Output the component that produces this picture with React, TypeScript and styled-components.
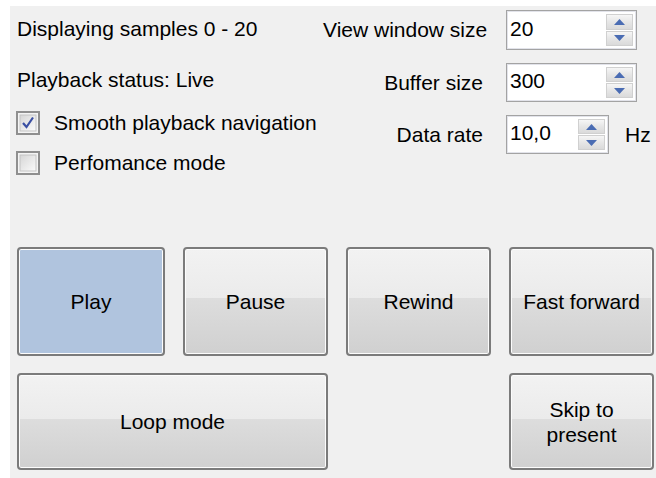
import React from 'react'
import styled, { createGlobalStyle } from 'styled-components'

const GlobalStyle = createGlobalStyle`
  html, body {
    margin: 0;
    background: #fff;
  }
  body {
    font-family: 'Liberation Sans', Arial, sans-serif;
    font-size: 21px;
    color: #000;
  }
`

const Panel = styled.div`
  margin: 6px 0 0 10px;
  height: 472px;
  box-sizing: border-box;
  padding: 4px 0 0 7px;
  background: #f0f0f0;
  overflow: hidden;
`

const TopRow = styled.div`
  display: grid;
  grid-template-columns: 306px 1fr;
  align-items: start;
`

const LeftColumn = styled.div`
  display: flex;
  flex-direction: column;
  padding-top: 7px;
`

const Line = styled.div<{ $gap?: number }>`
  height: 24px;
  line-height: 24px;
  white-space: nowrap;
  margin-top: ${({ $gap }) => $gap ?? 0}px;
`

const CheckRow = styled.label<{ $gap?: number }>`
  display: flex;
  align-items: center;
  gap: 14px;
  height: 24px;
  line-height: 24px;
  white-space: nowrap;
  margin-left: -1px;
  margin-top: ${({ $gap }) => $gap ?? 0}px;
`

const Form = styled.div`
  display: grid;
  grid-template-columns: 160px auto;
  grid-template-rows: 40px 39px 39px;
  column-gap: 23px;
  row-gap: 13px;
  align-items: center;
`

const Label = styled.div`
  text-align: right;
  white-space: nowrap;
  line-height: 24px;
`

const Field = styled.div`
  display: flex;
  align-items: center;
  height: 100%;
`

const SpinBox = styled.div<{ $width: number }>`
  box-sizing: border-box;
  display: flex;
  width: ${({ $width }) => $width}px;
  height: 100%;
  padding: 2px 3px 3px 2px;
  background: #fff;
  border: 1px solid #a3a3a3;
  box-shadow: inset 0 0 0 1px #e2e3ea;
`

const Value = styled.div`
  flex: 1;
  display: flex;
  align-items: center;
  padding: 0 0 2px 1px;
  line-height: 24px;
`

const SpinColumn = styled.div`
  display: flex;
  flex-direction: column;
  width: 27px;
  margin-top: 1px;
`

const SpinButton = styled.div`
  flex: 1;
  display: flex;
  align-items: center;
  justify-content: center;
  border: 1px solid #d0d0d0;
  background: linear-gradient(#f6f6f6, #e6e6e6 50%, #dadada);
  & + & {
    margin-top: 1px;
  }
`

const Unit = styled.span`
  margin-left: 16px;
  line-height: 24px;
`

const Buttons = styled.div`
  display: grid;
  grid-template-columns: 148px 145px 145px 145px;
  grid-template-rows: 109px 97px;
  column-gap: 18px;
  row-gap: 17px;
  margin-top: 72px;
`

const PushButton = styled.button<{ $active?: boolean; $span?: string }>`
  grid-column: ${({ $span }) => $span ?? 'auto'};
  box-sizing: border-box;
  margin: 0;
  padding: 0;
  font: inherit;
  color: #000;
  line-height: 25px;
  border: 2px solid #7b7b7b;
  border-radius: 4px;
  box-shadow: inset 0 0 0 1px #fcfcfc;
  background: ${({ $active }) =>
    $active
      ? '#b0c4de'
      : 'linear-gradient(#f2f2f2, #ebebeb 47%, #dddddd 47%, #d0d0d0)'};
`

const Arrow: React.FC<{ down?: boolean }> = ({ down }) => (
  <svg width="11" height="6" viewBox="0 0 11 6">
    <path
      d={down ? 'M0 0 L11 0 L5.5 6 Z' : 'M0 6 L11 6 L5.5 0 Z'}
      fill="#4a6cb3"
    />
  </svg>
)

const CheckBox: React.FC<{ checked?: boolean }> = ({ checked }) => (
  <svg width="24" height="24" viewBox="0 0 24 24">
    <defs>
      <linearGradient id={checked ? 'cbOn' : 'cbOff'} x1="0" y1="0" x2="1" y2="1">
        <stop offset="0" stopColor="#d6d6d6" />
        <stop offset="1" stopColor="#fbfbfb" />
      </linearGradient>
    </defs>
    <rect x="1" y="1" width="22" height="22" fill="#f4f4f4" stroke="#8f8f8f" strokeWidth="2" />
    <rect x="4" y="4" width="16" height="16" fill={`url(#${checked ? 'cbOn' : 'cbOff'})`} stroke="#c4c4c4" />
    {checked && (
      <path d="M7 12 L10.5 16 L17 6.5" fill="none" stroke="#3a4fa3" strokeWidth="2.2" />
    )}
  </svg>
)

const Spinner: React.FC<{ value: string; width: number }> = ({ value, width }) => (
  <SpinBox $width={width}>
    <Value>{value}</Value>
    <SpinColumn>
      <SpinButton>
        <Arrow />
      </SpinButton>
      <SpinButton>
        <Arrow down />
      </SpinButton>
    </SpinColumn>
  </SpinBox>
)

const App: React.FC = () => {
  return (
    <>
      <GlobalStyle />
      <Panel>
        <TopRow>
          <LeftColumn>
            <Line>Displaying samples 0 - 20</Line>
            <Line $gap={27}>Playback status: Live</Line>
            <CheckRow $gap={19}>
              <CheckBox checked />
              Smooth playback navigation
            </CheckRow>
            <CheckRow $gap={16}>
              <CheckBox />
              Perfomance mode
            </CheckRow>
          </LeftColumn>
          <Form>
            <Label>View window size</Label>
            <Field>
              <Spinner value="20" width={131} />
            </Field>
            <Label>Buffer size</Label>
            <Field>
              <Spinner value="300" width={131} />
            </Field>
            <Label>Data rate</Label>
            <Field>
              <Spinner value="10,0" width={103} />
              <Unit>Hz</Unit>
            </Field>
          </Form>
        </TopRow>
        <Buttons>
          <PushButton $active>Play</PushButton>
          <PushButton>Pause</PushButton>
          <PushButton>Rewind</PushButton>
          <PushButton>Fast forward</PushButton>
          <PushButton $span="1 / span 2">Loop mode</PushButton>
          <PushButton $span="4">
            Skip to
            <br />
            present
          </PushButton>
        </Buttons>
      </Panel>
    </>
  )
}

export default App
